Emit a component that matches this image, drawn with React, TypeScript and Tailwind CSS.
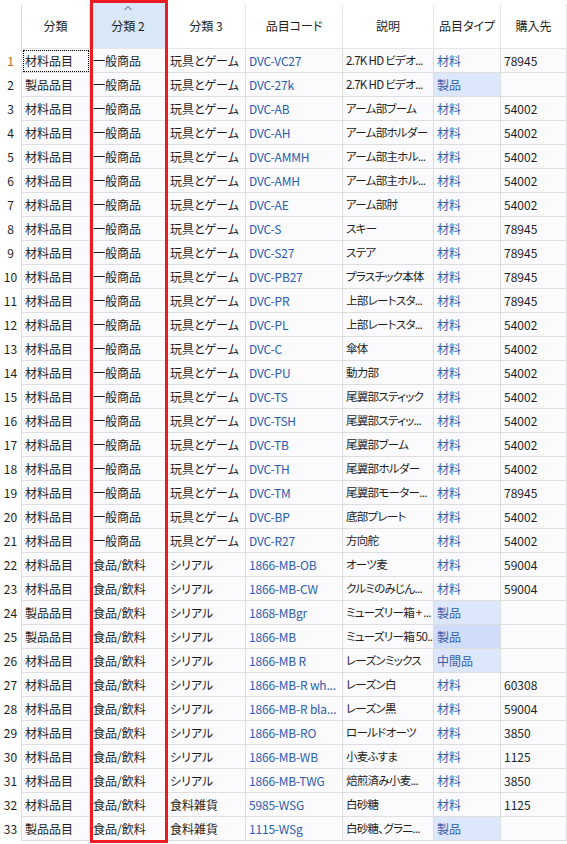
import React from "react";

type Row = [string, string, string, string, string, string, string];

const rows: Row[] = [
  ["材料品目", "一般商品", "玩具とゲーム", "DVC-VC27", "2.7K HD ビデオ...", "材料", "78945"],
  ["製品品目", "一般商品", "玩具とゲーム", "DVC-27k", "2.7K HD ビデオ...", "製品", ""],
  ["材料品目", "一般商品", "玩具とゲーム", "DVC-AB", "アーム部ブーム", "材料", "54002"],
  ["材料品目", "一般商品", "玩具とゲーム", "DVC-AH", "アーム部ホルダー", "材料", "54002"],
  ["材料品目", "一般商品", "玩具とゲーム", "DVC-AMMH", "アーム部主ホル...", "材料", "54002"],
  ["材料品目", "一般商品", "玩具とゲーム", "DVC-AMH", "アーム部主ホル...", "材料", "54002"],
  ["材料品目", "一般商品", "玩具とゲーム", "DVC-AE", "アーム部肘", "材料", "54002"],
  ["材料品目", "一般商品", "玩具とゲーム", "DVC-S", "スキー", "材料", "78945"],
  ["材料品目", "一般商品", "玩具とゲーム", "DVC-S27", "ステア", "材料", "78945"],
  ["材料品目", "一般商品", "玩具とゲーム", "DVC-PB27", "プラスチック本体", "材料", "78945"],
  ["材料品目", "一般商品", "玩具とゲーム", "DVC-PR", "上部レートスタ...", "材料", "78945"],
  ["材料品目", "一般商品", "玩具とゲーム", "DVC-PL", "上部レートスタ...", "材料", "54002"],
  ["材料品目", "一般商品", "玩具とゲーム", "DVC-C", "傘体", "材料", "54002"],
  ["材料品目", "一般商品", "玩具とゲーム", "DVC-PU", "動力部", "材料", "54002"],
  ["材料品目", "一般商品", "玩具とゲーム", "DVC-TS", "尾翼部スティック", "材料", "54002"],
  ["材料品目", "一般商品", "玩具とゲーム", "DVC-TSH", "尾翼部スティッ...", "材料", "54002"],
  ["材料品目", "一般商品", "玩具とゲーム", "DVC-TB", "尾翼部ブーム", "材料", "54002"],
  ["材料品目", "一般商品", "玩具とゲーム", "DVC-TH", "尾翼部ホルダー", "材料", "54002"],
  ["材料品目", "一般商品", "玩具とゲーム", "DVC-TM", "尾翼部モーター...", "材料", "78945"],
  ["材料品目", "一般商品", "玩具とゲーム", "DVC-BP", "底部プレート", "材料", "54002"],
  ["材料品目", "一般商品", "玩具とゲーム", "DVC-R27", "方向舵", "材料", "54002"],
  ["材料品目", "食品/飲料", "シリアル", "1866-MB-OB", "オーツ麦", "材料", "59004"],
  ["材料品目", "食品/飲料", "シリアル", "1866-MB-CW", "クルミのみじん...", "材料", "59004"],
  ["製品品目", "食品/飲料", "シリアル", "1868-MBgr", "ミューズリー箱 + ...", "製品", ""],
  ["製品品目", "食品/飲料", "シリアル", "1866-MB", "ミューズリー箱 50...", "製品", ""],
  ["材料品目", "食品/飲料", "シリアル", "1866-MB R", "レーズンミックス", "中間品", ""],
  ["材料品目", "食品/飲料", "シリアル", "1866-MB-R wh...", "レーズン白", "材料", "60308"],
  ["材料品目", "食品/飲料", "シリアル", "1866-MB-R bla...", "レーズン黒", "材料", "59004"],
  ["材料品目", "食品/飲料", "シリアル", "1866-MB-RO", "ロールドオーツ", "材料", "3850"],
  ["材料品目", "食品/飲料", "シリアル", "1866-MB-WB", "小麦ふすま", "材料", "1125"],
  ["材料品目", "食品/飲料", "シリアル", "1866-MB-TWG", "焙煎済み小麦...", "材料", "3850"],
  ["材料品目", "食品/飲料", "食料雑貨", "5985-WSG", "白砂糖", "材料", "1125"],
  ["製品品目", "食品/飲料", "食料雑貨", "1115-WSg", "白砂糖、グラニ...", "製品", ""],
];

const headers = ["分類", "分類 2", "分類 3", "品目コード", "説明", "品目タイプ", "購入先"];

const cellCore =
  "h-[24px] flex items-center px-[3px] border-r border-b border-[#dedede] whitespace-nowrap overflow-hidden";
const cellBase = cellCore + " bg-[#fbfbfd]";

export default function App() {
  return (
    <div
      className="relative w-[567px] h-[844px] bg-white overflow-hidden text-[12px] text-[#1e1e1e] [font-feature-settings:'palt']"
      style={{ fontFamily: '"Noto Sans CJK JP", "Noto Sans", sans-serif' }}
    >
      <div className="grid grid-cols-[22px_68px_77px_79px_97px_91px_67px_66px] pt-[4px]">
        {/* header */}
        <div className="h-[45px] border-r border-[#dedede]" />
        {headers.map((h, i) => (
          <div
            key={h}
            className={
              "relative flex items-center justify-center border-r border-b border-[#e6e6e6] " +
              (i === 1 ? "bg-[#d9e8f7] -mt-[4px] h-[49px] pt-[4px]" : "h-[45px]")
            }
          >
            {i === 1 && (
              <svg
                className="absolute left-1/2 -translate-x-1/2 top-[5px]"
                width="9"
                height="6"
                viewBox="0 0 9 6"
              >
                <polyline points="1,5 4.5,1.5 8,5" fill="none" stroke="#555" strokeWidth="1" />
              </svg>
            )}
            <span>{h}</span>
          </div>
        ))}
        {/* rows */}
        {rows.map((r, idx) => {
          const isProd = r[5] !== "材料";
          return (
            <React.Fragment key={idx}>
              <div
                className={
                  "h-[24px] flex items-center justify-center border-r border-[#dedede] " +
                  (idx === 0 ? "text-[#b8651a]" : "text-[#1e1e1e]")
                }
              >
                {idx + 1}
              </div>
              <div
                className={
                  cellBase +
                  (idx === 0 ? " outline-1 outline-dotted outline-black -outline-offset-[2px]" : "")
                }
              >
                {r[0]}
              </div>
              <div className={cellBase}>{r[1]}</div>
              <div className={cellBase}>{r[2]}</div>
              <div className={cellBase + " text-[#2c5bb0] tracking-[-0.2px]"}>{r[3]}</div>
              <div className={cellBase + " tracking-[-0.7px] text-[11.5px]"}>{r[4]}</div>
              <div
                className={
                  cellCore +
                  " text-[#3a5ea8] " +
                  (isProd ? (idx === 24 ? "bg-[#cfdcfa]" : "bg-[#dde7fc]") : "bg-[#fbfbfd]")
                }
              >
                {r[5]}
              </div>
              <div className={cellBase}>{r[6]}</div>
            </React.Fragment>
          );
        })}
      </div>
      {/* red highlight box */}
      <div className="absolute left-[90px] top-0 w-[78px] h-[843px] border-[3px] border-[#ec1c24] pointer-events-none" />
    </div>
  );
}
